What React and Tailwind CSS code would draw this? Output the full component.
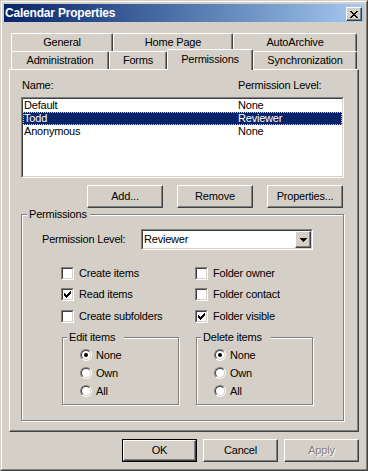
import React from 'react';

const TOP_TABS = [
  { label: 'General', cls: 'w-[102px]' },
  { label: 'Home Page', cls: 'w-[120px]' },
  { label: 'AutoArchive', cls: 'w-[124px]' },
];

const BOTTOM_TABS = [
  { label: 'Administration', cls: 'w-[98px]' },
  { label: 'Forms', cls: 'w-[58px]' },
  { label: 'Permissions', cls: 'w-[86px]', selected: true },
  { label: 'Synchronization', cls: 'w-[104px]' },
];

const USERS = [
  { name: 'Default', level: 'None' },
  { name: 'Todd', level: 'Reviewer', selected: true },
  { name: 'Anonymous', level: 'None' },
];

const CHECKS = [
  [{ label: 'Create items' }, { label: 'Folder owner' }],
  [{ label: 'Read items', checked: true }, { label: 'Folder contact' }],
  [{ label: 'Create subfolders' }, { label: 'Folder visible', checked: true }],
];

// classic 3D edges
const raised = 'border border-t-white border-l-white border-r-[#404040] border-b-[#404040] shadow-[inset_-1px_-1px_0_#808080] bg-[#d4d0c8]';
const sunkenOuter = 'border border-t-[#808080] border-l-[#808080] border-r-white border-b-white';
const sunkenInner = 'border border-t-[#404040] border-l-[#404040] border-r-[#d4d0c8] border-b-[#d4d0c8] bg-white';
const etched = 'border border-[#808080] shadow-[inset_1px_1px_0_#fff,1px_1px_0_#fff]';

function CloseGlyph() {
  const rows = ['11000011', '01100110', '00111100', '00011000', '00111100', '01100110', '11000011'];
  return (
    <svg width="8" height="7" shapeRendering="crispEdges">
      {rows.map((r, y) =>
        r.split('').map((c, x) => (c === '1' ? <rect key={`${x}-${y}`} x={x} y={y} width="1" height="1" fill="#000" /> : null))
      )}
    </svg>
  );
}

function CheckGlyph() {
  const rows = ['0000001', '0000011', '1000111', '1101110', '1111100', '0111000', '0010000'];
  return (
    <svg width="7" height="7" shapeRendering="crispEdges">
      {rows.map((r, y) =>
        r.split('').map((c, x) => (c === '1' ? <rect key={`${x}-${y}`} x={x} y={y} width="1" height="1" fill="#000" /> : null))
      )}
    </svg>
  );
}

function Checkbox({ label, checked }) {
  return (
    <div className="flex items-center h-[13px]">
      <div className={`w-[13px] h-[13px] ${sunkenOuter}`}>
        <div className={`w-full h-full flex items-center justify-center ${sunkenInner}`}>
          {checked && <CheckGlyph />}
        </div>
      </div>
      <span className="ml-[5px] leading-[13px]">{label}</span>
    </div>
  );
}

function Radio({ label, checked }) {
  return (
    <div className="flex items-center h-[12px]">
      <div className="w-[12px] h-[12px] rounded-full border border-t-[#808080] border-l-[#808080] border-r-white border-b-white">
        <div className="w-full h-full rounded-full border border-t-[#404040] border-l-[#404040] border-r-[#d4d0c8] border-b-[#d4d0c8] bg-white flex items-center justify-center">
          {checked && <div className="w-[4px] h-[4px] rounded-full bg-black" />}
        </div>
      </div>
      <span className="ml-[4px] leading-[13px]">{label}</span>
    </div>
  );
}

function RadioGroup({ title }) {
  return (
    <div className={`relative w-[117px] h-[68px] ${etched}`}>
      <span className="absolute left-[4px] -top-[7px] pl-[2px] pr-[9px] bg-[#d4d0c8] leading-[13px]">{title}</span>
      <div className="mt-[11px] ml-[17px] flex flex-col gap-[6px]">
        <Radio label="None" checked />
        <Radio label="Own" />
        <Radio label="All" />
      </div>
    </div>
  );
}

function Button({ children }) {
  return (
    <div className={`w-[76px] h-[23px] flex items-center justify-center ${raised}`}>
      {children}
    </div>
  );
}

export default function App() {
  return (
    <div className="w-[368px] h-[471px] bg-[#d4d0c8] text-black text-[11px] tracking-[-0.2px] font-['Liberation_Sans',Arial,sans-serif]">
      <div className="h-full border border-t-[#d4d0c8] border-l-[#d4d0c8] border-r-[#404040] border-b-[#404040]">
        <div className="h-full border border-t-white border-l-white border-r-[#808080] border-b-[#808080] p-[2px]">
          {/* Title bar */}
          <div className="h-[18px] flex justify-between bg-linear-to-r from-[#0a246a] to-[#a6caf0] pl-[1px] pr-[2px]">
            <span className="text-white font-bold text-[12px] tracking-[-0.2px] leading-[18px]">Calendar Properties</span>
            <div className={`mt-[3px] w-[16px] h-[14px] flex items-center justify-center ${raised}`}>
              <CloseGlyph />
            </div>
          </div>

          {/* Tabs */}
          <div className="mt-[11px] ml-[5px] w-[350px]">
            <div className="flex pl-[2px] h-[18px]">
              {TOP_TABS.map((t) => (
                <div key={t.label} className={`${t.cls} h-[18px] flex items-center justify-center bg-[#d4d0c8] border-t border-l border-r border-t-white border-l-white border-r-[#404040] shadow-[inset_-1px_0_0_#808080] rounded-t-[2px]`}>
                  {t.label}
                </div>
              ))}
            </div>
            <div className="flex items-start pl-[2px] h-[18px]">
              {BOTTOM_TABS.map((t) =>
                t.selected ? (
                  <div key={t.label} className={`${t.cls} relative z-10 -mt-[2px] h-[21px] pb-[2px] flex items-center justify-center bg-[#d4d0c8] border-t border-l border-r border-t-white border-l-white border-r-[#404040] shadow-[inset_-1px_0_0_#808080] rounded-t-[2px]`}>
                    {t.label}
                  </div>
                ) : (
                  <div key={t.label} className={`${t.cls} h-[18px] flex items-center justify-center bg-[#d4d0c8] border-t border-l border-r border-t-white border-l-white border-r-[#404040] shadow-[inset_-1px_0_0_#808080] rounded-t-[2px]`}>
                    {t.label}
                  </div>
                )
              )}
            </div>

            {/* Tab page */}
            <div className="w-[350px] h-[363px] pl-[11px] border border-t-white border-l-white border-r-[#404040] border-b-[#404040] shadow-[inset_-1px_-1px_0_#808080]">
              <div className="mt-[9px] flex h-[13px] leading-[13px]">
                <span className="w-[217px] pl-[1px]">Name:</span>
                <span>Permission Level:</span>
              </div>

              <div className={`mt-[5px] w-[323px] h-[81px] ${sunkenOuter}`}>
                <div className={`w-full h-full ${sunkenInner}`}>
                  {USERS.map((u) => (
                    <div
                      key={u.name}
                      className={
                        u.selected
                          ? 'flex h-[13px] leading-[13px] bg-[#0a246a] text-white outline-1 outline-dotted outline-[#d8d29a] -outline-offset-1'
                          : 'flex h-[13px] leading-[13px]'
                      }
                    >
                      <span className="w-[215px] pl-[1px]">{u.name}</span>
                      <span>{u.level}</span>
                    </div>
                  ))}
                </div>
              </div>

              <div className="mt-[7px] ml-[66px] flex gap-[14px]">
                <Button>Add...</Button>
                <Button>Remove</Button>
                <Button>Properties...</Button>
              </div>

              {/* Permissions group */}
              <div className={`mt-[6px] relative w-[323px] h-[207px] ${etched}`}>
                <span className="absolute left-[5px] -top-[7px] pl-[2px] pr-[3px] bg-[#d4d0c8] leading-[13px]">Permissions</span>

                <div className="mt-[14px] flex items-center h-[21px]">
                  <span className="ml-[20px] w-[99px]">Permission Level:</span>
                  <div className={`w-[172px] h-[21px] ${sunkenOuter}`}>
                    <div className={`w-full h-full flex items-center justify-between ${sunkenInner}`}>
                      <span className="pl-[1px] leading-[13px]">Reviewer</span>
                      <div className={`w-[16px] h-[17px] flex items-center justify-center ${raised}`}>
                        <svg width="7" height="4" shapeRendering="crispEdges">
                          <path d="M0 0H7L3.5 4Z" fill="#000" />
                        </svg>
                      </div>
                    </div>
                  </div>
                </div>

                <div className="ml-[39px] mt-[17px]">
                  {CHECKS.map((row, i) => (
                    <div key={i} className={i === 0 ? 'flex' : i === 1 ? 'flex mt-[8px]' : 'flex mt-[9px]'}>
                      <div className="w-[134px]">
                        <Checkbox {...row[0]} />
                      </div>
                      <Checkbox {...row[1]} />
                    </div>
                  ))}
                </div>

                <div className="mt-[14px] ml-[40px] flex gap-[17px]">
                  <RadioGroup title="Edit items" />
                  <RadioGroup title="Delete items" />
                </div>
              </div>
            </div>
          </div>

          {/* Dialog buttons */}
          <div className="mt-[7px] ml-[5px] w-[350px] flex justify-end gap-[6px]">
            <div className="w-[75px] h-[23px] border border-black">
              <div className={`w-full h-full flex items-center justify-center ${raised}`}>OK</div>
            </div>
            <div className={`w-[75px] h-[23px] flex items-center justify-center ${raised}`}>Cancel</div>
            <div className={`w-[75px] h-[23px] flex items-center justify-center text-[#808080] [text-shadow:1px_1px_0_#fff] ${raised}`}>Apply</div>
          </div>
        </div>
      </div>
    </div>
  );
}
